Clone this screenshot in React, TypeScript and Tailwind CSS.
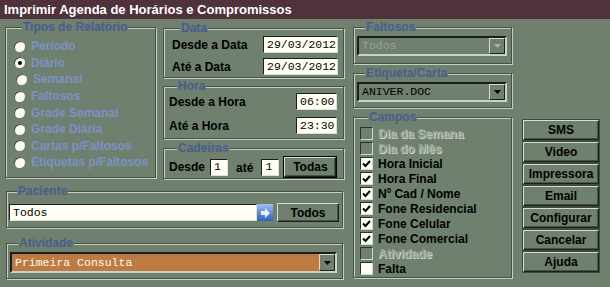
import React from "react";

const BG = "bg-[#6f806f]";

function Group({
  title,
  className,
  children
}: {
  title: string;
  className: string;
  children?: React.ReactNode;
}) {
  return (
    <fieldset
      className={`border border-[#465246] shadow-[inset_1px_1px_0_#c6cfc4,1px_1px_0_#c6cfc4] ${className}`}
    >
      <legend className={`ml-[8px] px-[1px] ${BG} text-[12px] font-bold leading-[12px] text-[#4a5c8e]`}>
        {title}
      </legend>
      {children}
    </fieldset>
  );
}

function Input({ value, className }: { value: string; className: string }) {
  return (
    <div
      className={`flex items-center border border-t-[#1c1c1c] border-l-[#1c1c1c] border-b-[#d9e0d7] border-r-[#d9e0d7] bg-[#fffff3] pl-[3px] font-['Liberation_Mono',monospace] text-[11.5px] leading-none text-black ${className}`}
    >
      {value}
    </div>
  );
}

function Button({ label, className = "" }: { label: string; className?: string }) {
  return (
    <div
      className={`flex items-center justify-center border border-t-[#d6ded4] border-l-[#d6ded4] border-b-[#1a221a] border-r-[#1a221a] ${BG} text-[12px] font-bold leading-none text-black shadow-[inset_-1px_-1px_0_#475347] ${className}`}
    >
      {label}
    </div>
  );
}

function Arrow({ disabled }: { disabled?: boolean }) {
  return (
    <div className="flex h-full w-[16px] items-center justify-center border border-t-[#d6ded4] border-l-[#d6ded4] border-b-[#1a221a] border-r-[#1a221a] bg-[#6f806f]">
      <svg width="7" height="4" viewBox="0 0 7 4">
        <path d="M0 0h7L3.5 4z" fill={disabled ? "#a9b4a7" : "#000"} />
      </svg>
    </div>
  );
}

function Select({
  value,
  disabled,
  className,
  box
}: {
  value: string;
  disabled?: boolean;
  className: string;
  box: string;
}) {
  return (
    <div
      className={`flex border-2 border-t-[#1c1c1c] border-l-[#1c1c1c] border-b-[#c9d2c7] border-r-[#c9d2c7] ${box} ${className}`}
    >
      <div
        className={`flex flex-1 items-center pl-[3px] font-['Liberation_Mono',monospace] text-[11.5px] leading-none ${
          disabled ? "text-[#97a395]" : ""
        }`}
      >
        {value}
      </div>
      <Arrow disabled={disabled} />
    </div>
  );
}

function Radio({ label, checked, shift }: { label: string; checked?: boolean; shift?: boolean }) {
  return (
    <div className={`flex h-[16.6px] items-center gap-[6px] ${shift ? "pl-[2px]" : ""}`}>
      <span className="flex h-[11px] w-[11px] items-center justify-center rounded-full bg-[#fbfbf2] shadow-[inset_1px_1px_0_#3c463c]">
        {checked ? <span className="h-[4px] w-[4px] rounded-full bg-black" /> : null}
      </span>
      <span className="text-[12px] font-bold leading-none text-[#7d90c4]">{label}</span>
    </div>
  );
}

function Check({ label, checked, disabled }: { label: string; checked?: boolean; disabled?: boolean }) {
  return (
    <div className="flex h-[15px] items-center gap-[5px]">
      <span
        className={`flex h-[13px] w-[13px] items-center justify-center border border-t-[#2a322a] border-l-[#2a322a] border-b-[#d3dbd1] border-r-[#d3dbd1] ${
          disabled ? "" : "bg-[#fffff3]"
        }`}
      >
        {checked ? (
          <svg width="9" height="8" viewBox="0 0 9 8">
            <path d="M1 3.5l2.5 2.5L8 1" stroke="#000" strokeWidth="2" fill="none" />
          </svg>
        ) : null}
      </span>
      <span
        className={`text-[12px] font-bold leading-none ${
          disabled ? "text-[#95a093] [text-shadow:1px_1px_0_#cfd7cd]" : "text-black"
        }`}
      >
        {label}
      </span>
    </div>
  );
}

function Label({ children }: { children: React.ReactNode }) {
  return <span className="text-[12px] font-bold leading-none text-black">{children}</span>;
}

export default function App() {
  return (
    <div className={`h-[287px] w-[610px] overflow-hidden ${BG} font-['Liberation_Sans',Arial,sans-serif]`}>
      <div className="h-[19px] bg-[#4f323c] pl-[4px] text-[13px] font-bold leading-[19px] text-white">
        Imprimir Agenda de Horários e Compromissos
      </div>
      <div className="flex pt-[2px]">
        <div className="ml-[5px] flex w-[339px] flex-col">
          <div className="flex">
            <Group title="Tipos de Relatório" className="h-[157px] w-[151px] pl-[8px] pt-[5px]">
              <Radio label="Período" />
              <Radio label="Diário" checked />
              <Radio label="Semanal" shift />
              <Radio label="Faltosos" />
              <Radio label="Grade Semanal" />
              <Radio label="Grade Diária" />
              <Radio label="Cartas p/Faltosos" />
              <Radio label="Etiquetas p/Faltosos" />
            </Group>
            <div className="ml-[7px] flex w-[181px] flex-col">
              <Group title="Data" className="mt-[1px] flex h-[56px] flex-col gap-[5px] pl-[8px] pr-[5px] pt-[2px]">
                <div className="flex h-[17px] items-center justify-between">
                  <Label>Desde a Data</Label>
                  <Input value="29/03/2012" className="h-[17px] w-[75px]" />
                </div>
                <div className="flex h-[17px] items-center justify-between">
                  <Label>Até a Data</Label>
                  <Input value="29/03/2012" className="h-[17px] w-[75px]" />
                </div>
              </Group>
              <Group title="Hora" className="mt-[2px] flex h-[59px] flex-col gap-[7px] pl-[5px] pr-[6px] pt-[1px]">
                <div className="flex h-[17px] items-center justify-between">
                  <Label>Desde a Hora</Label>
                  <Input value="06:00" className="h-[17px] w-[41px]" />
                </div>
                <div className="flex h-[17px] items-center justify-between">
                  <Label>Até a Hora</Label>
                  <Input value="23:30" className="h-[17px] w-[41px]" />
                </div>
              </Group>
              <Group title="Cadeiras" className="mt-[3px] h-[37px] pl-[5px] pt-[3px]">
                <div className="flex h-[20px] items-center">
                  <Label>Desde</Label>
                  <Input value="1" className="ml-[5px] h-[17px] w-[18px]" />
                  <span className="ml-[8px]">
                    <Label>até</Label>
                  </span>
                  <Input value="1" className="ml-[8px] h-[17px] w-[18px]" />
                  <Button label="Todas" className="ml-[5px] h-[20px] w-[52px] outline outline-1 outline-black" />
                </div>
              </Group>
            </div>
          </div>
          <Group title="Paciente" className="ml-[1px] mt-[6px] h-[43px] w-[337px] pl-[2px] pt-[6px]">
            <div className="flex h-[19px] items-center">
              <Input value="Todos" className="h-[17px] w-[248px]" />
              <div className="flex h-[17px] w-[16px] items-center justify-center bg-gradient-to-b from-[#9cc0ee] to-[#2f62b8]">
                <svg width="10" height="10" viewBox="0 0 10 10">
                  <path d="M1 3h4V0l5 5-5 5V7H1z" fill="#e8f2ff" />
                </svg>
              </div>
              <Button label="Todos" className="ml-[4px] h-[19px] w-[62px]" />
            </div>
          </Group>
          <Group title="Atividade" className="ml-[1px] mt-[9px] h-[42px] w-[337px] pl-[3px] pt-[3px]">
            <Select value="Primeira Consulta" className="h-[21px] w-[327px]" box="bg-[#bd7a42] text-[#fffbe8]" />
          </Group>
        </div>
        <div className="ml-[9px] flex w-[159px] flex-col">
          <Group title="Faltosos" className="h-[43px] pl-[3px] pt-[3px]">
            <Select value="Todos" disabled className="h-[20px] w-[150px]" box="" />
          </Group>
          <Group title="Etiqueta/Carta" className="mt-[3px] h-[41px] pl-[3px] pt-[3px]">
            <Select value="ANIVER.DOC" className="h-[20px] w-[150px]" box="bg-[#6f806f] text-black" />
          </Group>
          <Group title="Campos" className="mt-[3px] h-[167px] pl-[6px] pt-[3px]">
            <Check label="Dia da Semana" disabled />
            <Check label="Dia do Mês" disabled />
            <Check label="Hora Inicial" checked />
            <Check label="Hora Final" checked />
            <Check label="Nº Cad / Nome" checked />
            <Check label="Fone Residencial" checked />
            <Check label="Fone Celular" checked />
            <Check label="Fone Comercial" checked />
            <Check label="Atividade" disabled />
            <Check label="Falta" />
          </Group>
        </div>
        <div className="ml-[11px] flex w-[76px] flex-col gap-[2px] pt-[99px]">
          {["SMS", "Video", "Impressora", "Email", "Configurar", "Cancelar", "Ajuda"].map((b) => (
            <Button key={b} label={b} className="h-[20px] w-[76px] outline outline-1 outline-[#3e4a3e]" />
          ))}
        </div>
      </div>
    </div>
  );
}
